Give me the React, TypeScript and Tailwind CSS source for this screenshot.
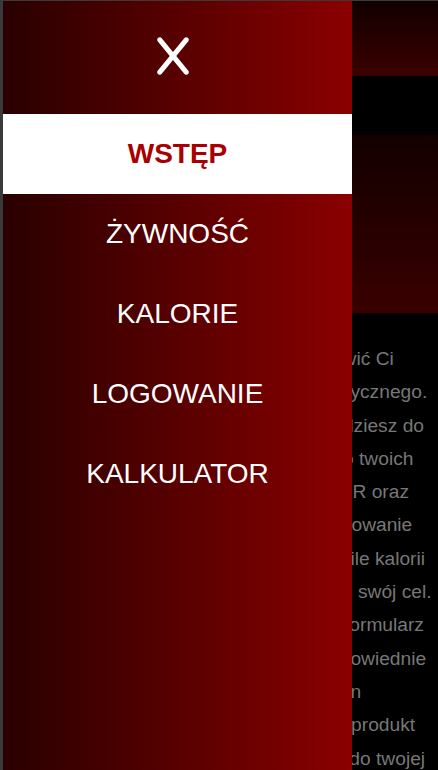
import React from 'react';

const menuItems = ['WSTĘP', 'ŻYWNOŚĆ', 'KALORIE', 'LOGOWANIE', 'KALKULATOR'];

// lines of the intro paragraph, broken the same way the page wraps them
const introLines = [
  'Witaj! Ta aplikacja ma za zadanie ułatwić Ci',
  'dbanie o dietę i regularność wysiłku fizycznego.',
  'Dzięki menu bocznemu szybciej przejdziesz do',
  'dobrego kalkulatora dopasowanego do twoich',
  'potrzeb, który szybko obliczy twoje BMR oraz',
  'wyznaczy również całkowite zapotrzebowanie',
  'kaloryczne. Dzięki niemu dowiesz się, ile kalorii',
  'potrzebujesz codziennie, aby osiągnąć swój cel.',
  'W zakładce Kalkulator znajdziesz też formularz',
  'w którym wystarczy jedynie podać odpowiednie',
  'dane, a następnie otrzymasz pełny plan',
  'żywieniowy. Możesz też wpisać każdy produkt',
  'spożyty w ciągu dnia, a trafi on prosto do twojej',
];

function CloseIcon() {
  return (
    <svg width="32" height="38" viewBox="0 0 32 38" fill="none" className="mr-[10px] mb-[3px]">
      <line x1="2.8" y1="2.8" x2="29.2" y2="35.2" stroke="white" strokeWidth="5" strokeLinecap="round" />
      <line x1="29.2" y1="2.8" x2="2.8" y2="35.2" stroke="white" strokeWidth="5" strokeLinecap="round" />
    </svg>
  );
}

export default function App() {
  const active = 'WSTĘP';

  return (
    <div className="relative h-[770px] overflow-hidden border-t border-l-[3px] border-[#3a3a3a] bg-black font-['Liberation_Sans',Arial,sans-serif]">
      {/* page behind the menu */}
      <header className="h-[75px] bg-gradient-to-b from-[#130000] to-[#3c0000]" />
      <nav className="h-[59px] bg-black" />
      <section className="h-[178px] bg-gradient-to-b from-[#130000] to-[#3a0000]" />
      <main className="pt-[29px] pl-5 pr-2">
        <p className="text-[19.2px] leading-[33.3px] text-[#777777]">
          {introLines.map((line, i) => (
            <span key={i} className="block whitespace-nowrap">
              {line}
            </span>
          ))}
        </p>
      </main>

      {/* side menu */}
      <aside className="absolute left-0 top-0 bottom-0 w-[349px] bg-gradient-to-r from-[#2a0000] to-[#8b0000]">
        <div className="h-[113px] flex items-center justify-center">
          <button className="flex items-center justify-center">
            <CloseIcon />
          </button>
        </div>
        <ul>
          {menuItems.map((item) => (
            <li
              key={item}
              className={
                item === active
                  ? 'h-[80px] flex items-center justify-center bg-white text-[#a80000] font-bold text-[28px]'
                  : 'h-[80px] flex items-center justify-center text-white text-[28px]'
              }
            >
              {item}
            </li>
          ))}
        </ul>
      </aside>
    </div>
  );
}
